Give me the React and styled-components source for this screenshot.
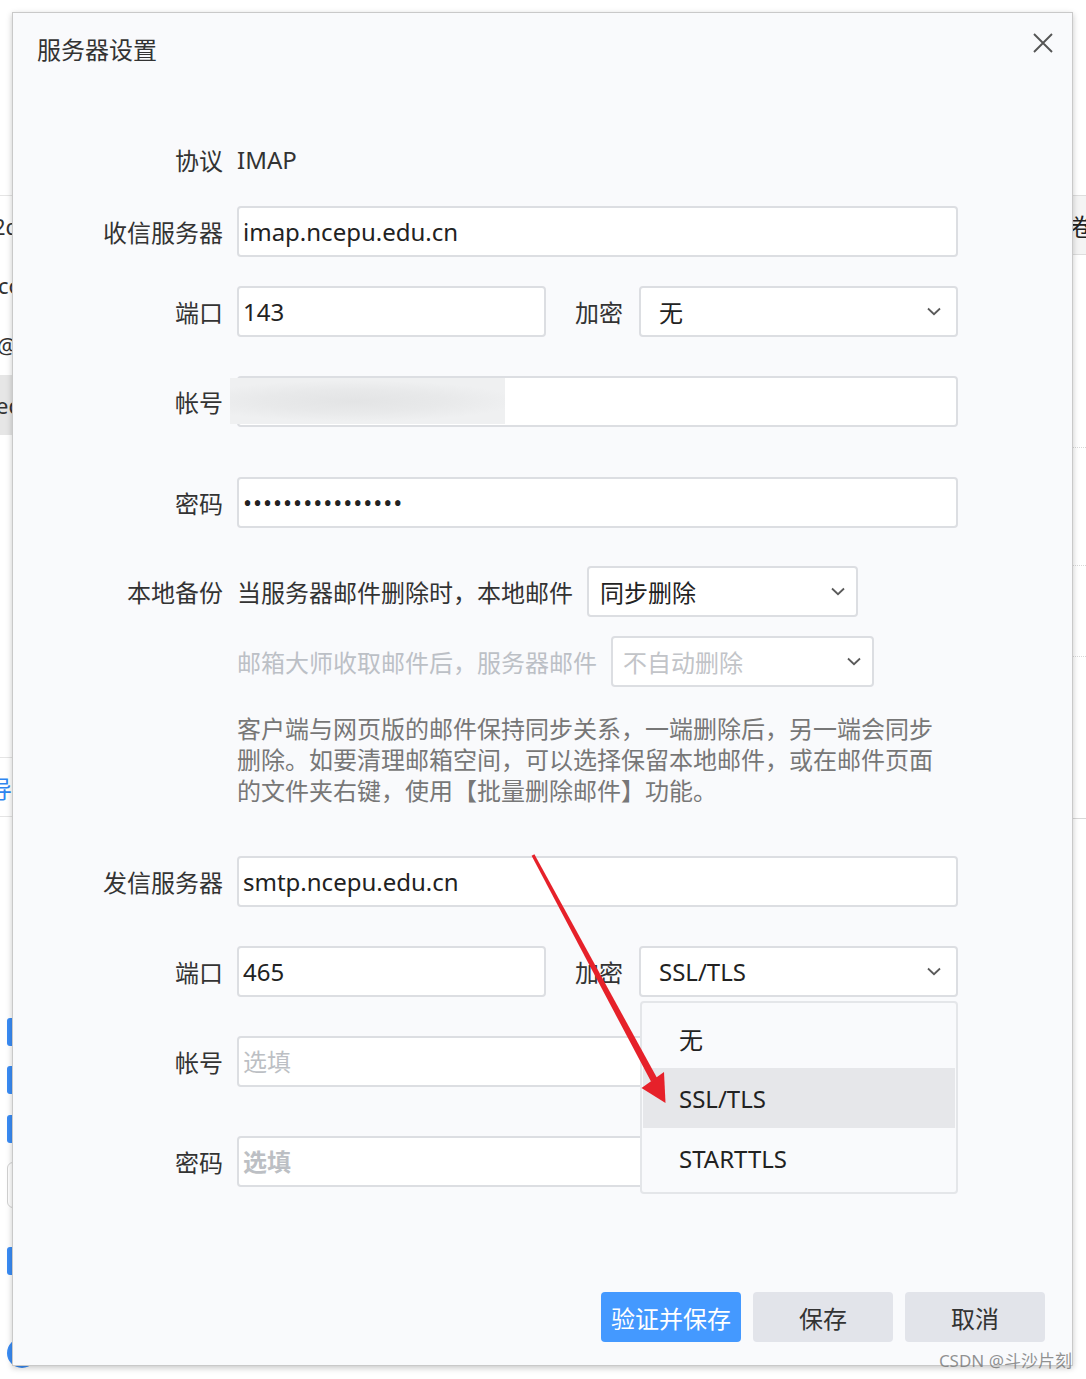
import styled, { createGlobalStyle } from "styled-components";

const GlobalStyle = createGlobalStyle`
  html, body { margin: 0; padding: 0; background: #fff; }
  body { font-family: "Noto Sans", "Noto Sans CJK SC", sans-serif; color: #333; }
  * { box-sizing: border-box; }
`;

const Page = styled.div`
  position: relative;
  width: 1086px;
  height: 1379px;
  overflow: hidden;
  background: #fff;
`;

/* ---------- app behind the dialog ---------- */

const Backdrop = styled.div`
  display: flex;
  justify-content: space-between;
  height: 100%;
`;

const SidePane = styled.div`
  width: 40px;
  display: flex;
  flex-direction: column;
  padding-top: 195px;
`;

const ListRow = styled.div`
  height: 60px;
  display: flex;
  align-items: center;
  font-size: 22px;
  color: #333;
  border-top: ${(p) => (p.$first ? "1px solid #e5e5e5" : "none")};
  background: ${(p) => (p.$active ? "#e6e6e6" : "transparent")};
  white-space: nowrap;

  span {
    margin-left: ${(p) => p.$shift || 0}px;
  }
`;

const NavRow = styled.div`
  margin-top: ${(p) => p.$mt}px;
  height: 60px;
  display: flex;
  align-items: center;
  border-top: 1px solid #e5e5e5;
  border-bottom: 1px solid #e5e5e5;
  font-size: 24px;
  color: #2f86f0;

  span {
    margin-left: -12px;
  }
`;

const BlueTab = styled.div`
  margin-top: ${(p) => p.$mt}px;
  margin-left: 7px;
  width: 24px;
  height: 28px;
  border-radius: 3px;
  background: #3a8cf5;
`;

const GhostBox = styled.div`
  margin-top: ${(p) => p.$mt}px;
  margin-left: 7px;
  width: 30px;
  height: 46px;
  border-radius: 6px;
  border: 1px solid #d2d2d2;
  background: #fff;
`;

const RoundDot = styled.div`
  margin-top: ${(p) => p.$mt}px;
  margin-left: 7px;
  width: 30px;
  height: 30px;
  border-radius: 50%;
  background: #3a8cf5;
`;

const RightTab = styled.div`
  height: 60px;
  display: flex;
  align-items: center;
  border-top: 1px solid #dedede;
  border-bottom: 1px solid #dedede;
  background: #f4f4f4;
  font-size: 24px;
  color: #222;
  padding-left: 24px;
`;

const RightRule = styled.div`
  margin-top: ${(p) => p.$mt}px;
  border-top: 1px ${(p) => p.$style || "dotted"} #d8d8d8;
`;

/* ---------- dialog ---------- */

const Dialog = styled.div`
  position: absolute;
  left: 12px;
  top: 12px;
  width: 1061px;
  height: 1354px;
  display: flex;
  flex-direction: column;
  background: #f9fafc;
  border: 1px solid #c9c9c9;
  box-shadow: 0 2px 6px rgba(0, 0, 0, 0.22);
`;

const Header = styled.div`
  display: flex;
  justify-content: space-between;
  align-items: flex-start;
  padding: 20px 19px 0 24px;
`;

const Title = styled.div`
  font-size: 24px;
  line-height: 36px;
  margin-top: -1px;
  margin-bottom: 1px;
  color: #333;
`;

const CloseButton = styled.button`
  width: 20px;
  height: 20px;
  padding: 0;
  border: none;
  background: transparent;
  cursor: pointer;
  display: flex;
`;

const Row = styled.div`
  display: flex;
  align-items: center;
  height: 51px;
  margin-top: ${(p) => p.$mt}px;
`;

const Label = styled.div`
  width: 210px;
  margin-right: 14px;
  text-align: right;
  font-size: 24px;
  color: #333;
  flex-shrink: 0;
`;

const Value = styled.div`
  font-size: 24px;
  color: ${(p) => (p.$muted ? "#bcc0c6" : "#333")};
  margin-left: ${(p) => p.$ml || 0}px;
  margin-right: ${(p) => p.$mr || 0}px;
  white-space: nowrap;
`;

const FieldWrap = styled.div`
  position: relative;
  width: ${(p) => p.$w}px;
  height: 51px;
  flex-shrink: 0;
`;

const Input = styled.input`
  width: 100%;
  height: 100%;
  border: 2px solid #dcdee2;
  border-radius: 4px;
  background: #fff;
  padding: 0 4px;
  font-family: inherit;
  font-size: 24px;
  letter-spacing: ${(p) => p.$spacing || "normal"};
  font-weight: ${(p) => p.$weight || 400};
  color: #222;
  outline: none;

  &::placeholder {
    color: #bcbfc4;
  }
`;

const BlurPatch = styled.div`
  position: absolute;
  left: -7px;
  top: 2px;
  width: 275px;
  height: 46px;
  background: radial-gradient(ellipse 60% 45% at 45% 50%, #e3e4e5 0%, #e8e9ea 55%, #eff0f1 100%);
`;

const SelectBox = styled.div`
  width: 100%;
  height: 100%;
  display: flex;
  align-items: center;
  justify-content: space-between;
  border: 2px solid #dcdee2;
  border-radius: 4px;
  background: #fff;
  padding: 0 ${(p) => p.$pr}px 0 ${(p) => p.$pl}px;
  font-size: 24px;
  color: ${(p) => (p.$muted ? "#c2c4c8" : "#222")};
  cursor: pointer;
`;

const Menu = styled.div`
  position: absolute;
  top: calc(100% + 4px);
  left: 1px;
  right: 0;
  padding: 5px 1px 4px;
  background: #f9fafc;
  border: 2px solid #e4e6e9;
  border-radius: 4px;
  z-index: 2;
`;

const MenuItem = styled.div`
  height: 60px;
  display: flex;
  align-items: center;
  padding-left: 36px;
  font-size: 24px;
  color: #222;
  background: ${(p) => (p.$active ? "#e6e7ea" : "transparent")};
`;

const Note = styled.p`
  margin: 26px 0 0 224px;
  width: 700px;
  font-size: 24px;
  line-height: 31px;
  color: #777;
`;

const Footer = styled.div`
  display: flex;
  justify-content: flex-end;
  gap: 12px;
  margin-top: 105px;
  padding-right: 27px;
`;

const Button = styled.button`
  width: 140px;
  height: 50px;
  border: none;
  border-radius: 4px;
  font-family: inherit;
  font-size: 24px;
  cursor: pointer;
  background: ${(p) => (p.$primary ? "#4499ff" : "#e2e4ea")};
  color: ${(p) => (p.$primary ? "#fff" : "#333")};
`;

const Annotation = styled.svg`
  position: absolute;
  left: 0;
  top: 0;
  pointer-events: none;
  z-index: 5;
`;

const Watermark = styled.div`
  position: absolute;
  right: 14px;
  bottom: 7px;
  font-size: 17px;
  color: rgba(110, 110, 110, 0.75);
  z-index: 6;
  white-space: nowrap;
`;

const Chevron = () => (
  <svg width="14" height="9" viewBox="0 0 14 9">
    <polyline points="1,1.5 7,7.2 13,1.5" fill="none" stroke="#5a5a5a" strokeWidth="1.8" />
  </svg>
);

const Select = ({ w, pl, pr, value, muted, children }) => (
  <FieldWrap $w={w}>
    <SelectBox $pl={pl} $pr={pr} $muted={muted}>
      <span>{value}</span>
      <Chevron />
    </SelectBox>
    {children}
  </FieldWrap>
);

export default function App() {
  return (
    <Page>
      <GlobalStyle />
      <Backdrop>
        <SidePane>
          <ListRow $first $shift={-7}><span>2qq.com</span></ListRow>
          <ListRow $shift={-2}><span>com</span></ListRow>
          <ListRow $shift={-3}><span>@163</span></ListRow>
          <ListRow $active $shift={-4}><span>edu</span></ListRow>
          <NavRow $mt={322}><span>导</span></NavRow>
          <BlueTab $mt={201} />
          <BlueTab $mt={20} />
          <BlueTab $mt={21} />
          <GhostBox $mt={19} />
          <BlueTab $mt={39} />
          <RoundDot $mt={63} />
        </SidePane>
        <SidePane>
          <RightTab>卷</RightTab>
          <RightRule $mt={192} />
          <RightRule $mt={117} />
          <RightRule $mt={90} />
          <RightRule $mt={161} $style="solid" />
        </SidePane>
      </Backdrop>

      <Dialog>
        <Header>
          <Title>服务器设置</Title>
          <CloseButton aria-label="关闭">
            <svg width="20" height="20" viewBox="0 0 20 20">
              <path d="M1 1 L19 19 M19 1 L1 19" stroke="#555" strokeWidth="1.9" />
            </svg>
          </CloseButton>
        </Header>

        <Row $mt={65}>
          <Label>协议</Label>
          <Value>IMAP</Value>
        </Row>
        <Row $mt={21}>
          <Label>收信服务器</Label>
          <FieldWrap $w={721}>
            <Input readOnly value="imap.ncepu.edu.cn" />
          </FieldWrap>
        </Row>
        <Row $mt={29}>
          <Label>端口</Label>
          <FieldWrap $w={309}>
            <Input readOnly value="143" />
          </FieldWrap>
          <Value $ml={29} $mr={16}>加密</Value>
          <Select w={319} pl={18} pr={15} value="无" />
        </Row>
        <Row $mt={39}>
          <Label>帐号</Label>
          <FieldWrap $w={721}>
            <Input readOnly value="" />
            <BlurPatch />
          </FieldWrap>
        </Row>
        <Row $mt={50}>
          <Label>密码</Label>
          <FieldWrap $w={721}>
            <Input readOnly value="••••••••••••••••" $spacing="1px" />
          </FieldWrap>
        </Row>
        <Row $mt={38}>
          <Label>本地备份</Label>
          <Value $mr={14}>当服务器邮件删除时，本地邮件</Value>
          <Select w={271} pl={11} pr={11} value="同步删除" />
        </Row>
        <Row $mt={19}>
          <Label />
          <Value $muted $mr={14}>邮箱大师收取邮件后，服务器邮件</Value>
          <Select w={263} pl={10} pr={11} value="不自动删除" muted />
        </Row>
        <Note>
          客户端与网页版的邮件保持同步关系，一端删除后，另一端会同步删除。如要清理邮箱空间，可以选择保留本地邮件，或在邮件页面的文件夹右键，使用【批量删除邮件】功能。
        </Note>
        <Row $mt={50}>
          <Label>发信服务器</Label>
          <FieldWrap $w={721}>
            <Input readOnly value="smtp.ncepu.edu.cn" />
          </FieldWrap>
        </Row>
        <Row $mt={39}>
          <Label>端口</Label>
          <FieldWrap $w={309}>
            <Input readOnly value="465" />
          </FieldWrap>
          <Value $ml={29} $mr={16}>加密</Value>
          <Select w={319} pl={18} pr={15} value="SSL/TLS">
            <Menu>
              <MenuItem>无</MenuItem>
              <MenuItem $active>SSL/TLS</MenuItem>
              <MenuItem>STARTTLS</MenuItem>
            </Menu>
          </Select>
        </Row>
        <Row $mt={39}>
          <Label>帐号</Label>
          <FieldWrap $w={721}>
            <Input readOnly placeholder="选填" />
          </FieldWrap>
        </Row>
        <Row $mt={49}>
          <Label>密码</Label>
          <FieldWrap $w={721}>
            <Input readOnly placeholder="选填" $weight={700} />
          </FieldWrap>
        </Row>

        <Footer>
          <Button $primary>验证并保存</Button>
          <Button>保存</Button>
          <Button>取消</Button>
        </Footer>
      </Dialog>

      <Annotation width="1086" height="1379" viewBox="0 0 1086 1379">
        <polygon points="531.6,855.8 534.4,854.2 657.2,1078.2 651.0,1081.6" fill="#e6212a" />
        <polygon points="641.5,1088 664,1072 665.5,1103" fill="#e6212a" />
      </Annotation>

      <Watermark>CSDN @斗沙片刻</Watermark>
    </Page>
  );
}
